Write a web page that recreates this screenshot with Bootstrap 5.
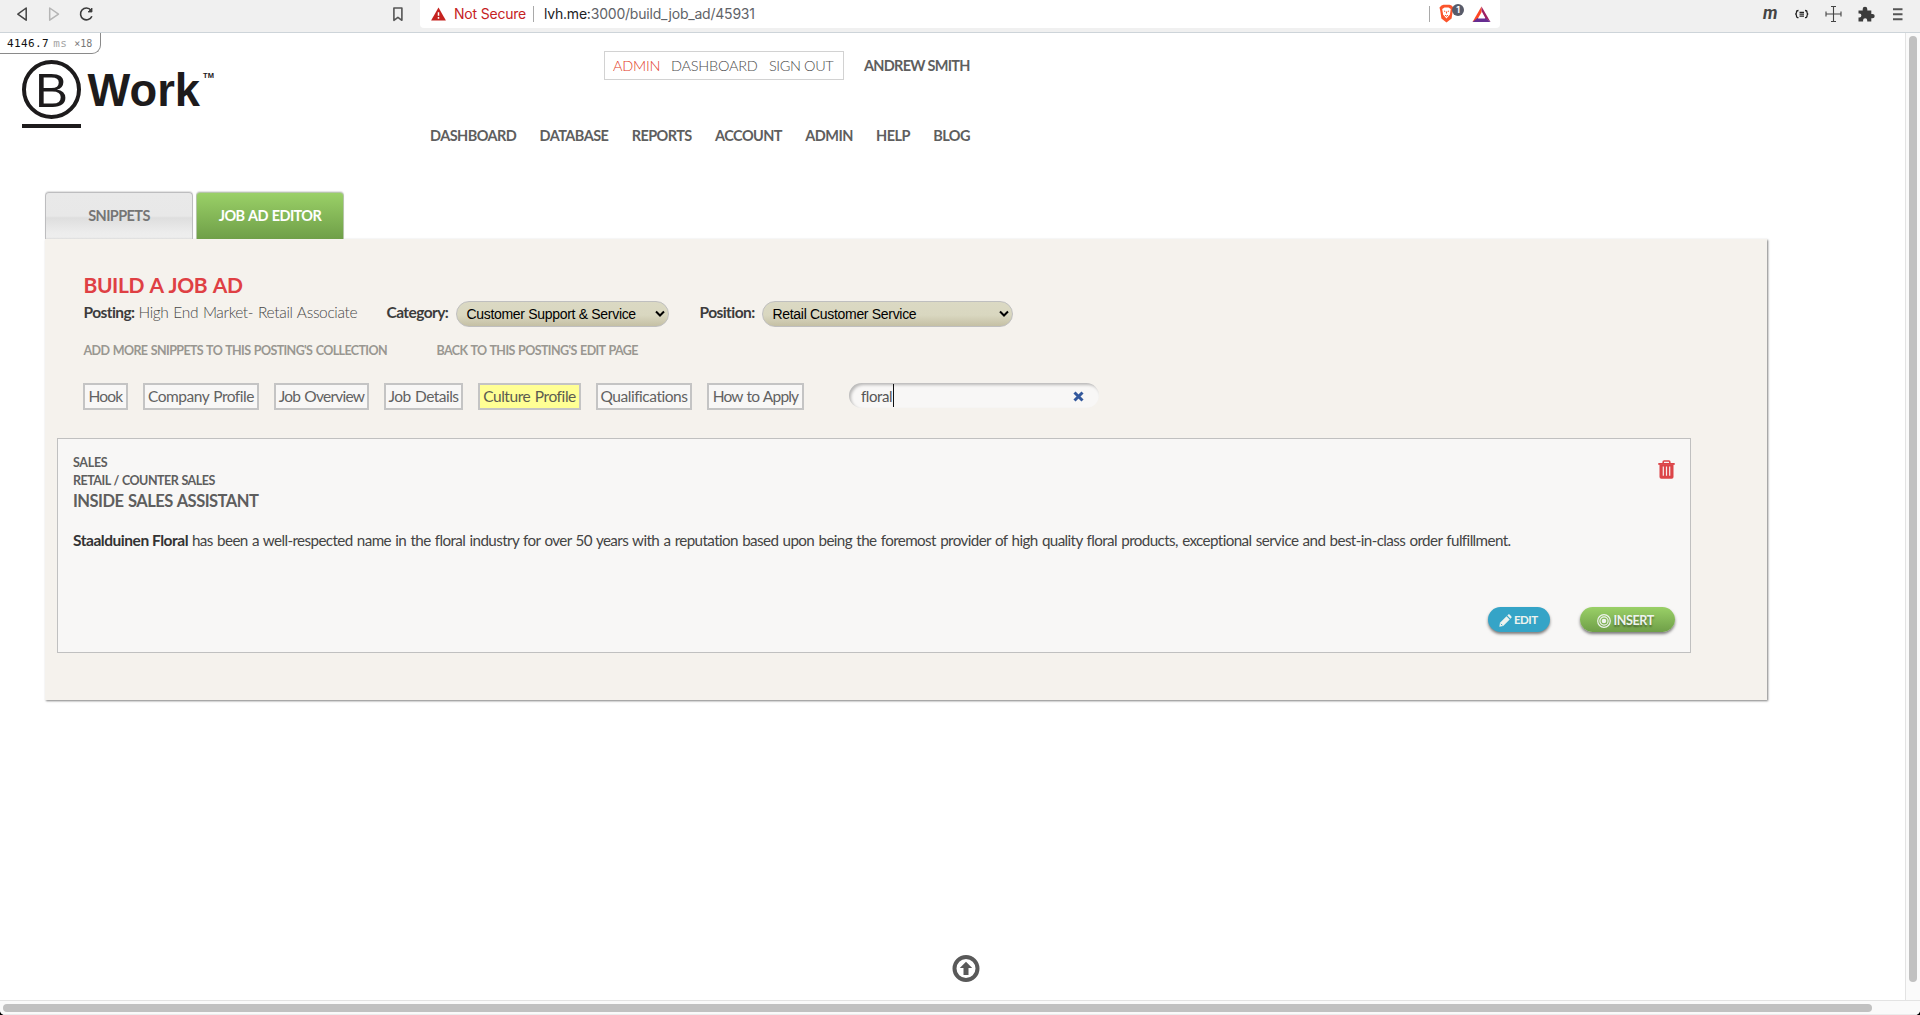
<!DOCTYPE html>
<html lang="en">
<head>
<meta charset="utf-8">
<title>Build a Job Ad</title>
<link href="https://cdn.jsdelivr.net/npm/bootstrap@5.3.0/dist/css/bootstrap.min.css" rel="stylesheet">
<style>
html{background:#000}
body{width:1920px;height:1015px;overflow:hidden;background:#000;font-family:Lato,sans-serif;font-size:15.5px;color:#5e5e5e}
svg{display:block;flex:none}
span,a,strong{white-space:nowrap}
a{color:inherit;text-decoration:none}
.app{width:1920px;height:1015px;background:#fff;border-radius:0 0 5px 5px;overflow:hidden}
/* browser toolbar */
.chrome-bar{height:33px;background:#f0f0f0;border-bottom:1px solid #cdd4d9;padding-left:16px}
.nav-icons{width:404px;height:28px}
.url-box{width:1080px;height:28px;background:#fff;border-radius:0 0 4px 4px;font:14px/28px Inter,sans-serif;padding-left:11px}
.insecure{color:#c5221f;letter-spacing:-.2px;width:79px;margin-left:8px}
.url-path{color:#5f6368;letter-spacing:-.21px;margin-left:10px}
.url-path b{font-weight:400;color:#202124}
.vline{width:1px;height:16px;background:#a9a9a9}
.ext-icons{width:145px;height:28px;margin-left:262px}
/* viewport */
.view{width:1905px;height:967px;background:#fff}
.profiler{left:0;top:33px;width:101px;height:21px;border:1px solid #8a8a8a;border-width:0 1px 1px 0;border-radius:0 0 9px 0;background:#fff;font:11px/21px "DejaVu Sans Mono",monospace;color:#111;padding-left:7px;letter-spacing:.4px}
.profiler i{font-style:normal;color:#a5a5a5;margin-left:4px}
.profiler em{font-style:normal;color:#777;font-size:10px;margin-left:7px;letter-spacing:0}
.page-head{width:970px;height:159px;padding-left:20px}
.head-nav{padding-top:18px}
.user-box{height:29px;border:1px solid #d2d2d2;width:240px;padding-left:8px}
.user-box,.user-row,.main-nav{font-size:14.5px;line-height:20px}
.user-box a{font-weight:300;letter-spacing:-.25px;color:#4c4c4c}
.user-box .u-admin{color:#e23c2a;width:58px}
.user-box .u-dash{width:98px}
.user-box .u-out{letter-spacing:-.4px}
.user-name{font-weight:700;letter-spacing:-.72px;width:106px;margin-left:20px}
.main-nav{font-weight:700;letter-spacing:-.56px;margin-top:46px;width:540px}
.main-nav a{margin-right:0}
.tab-row{padding-left:45px;height:47px}
.tab-btn{width:148px;height:47px;border:1px solid #bdbdbf;border-bottom:0;border-radius:4px 4px 0 0;font-weight:700;font-size:14.5px;line-height:46px;text-align:center;letter-spacing:-.6px;word-spacing:1px;margin-right:3px;box-shadow:0 -1px 1px rgba(0,0,0,.12)}
.tab-off{color:#757575;background:linear-gradient(#e9e9e9 0,#e8e8e8 50%,#dedede 54%,#ececec 85%,#eee 96%,#dcdcdc)}
.tab-on{color:#fff;background:linear-gradient(#9ad067,#6f9f48);border-color:#b5c5a8}
.panel{margin-left:45px;width:1722px;height:461px;background:#f5f2ed;box-shadow:1px 1px 2px rgba(0,0,0,.5);padding:33px 0 0 12px}
.pad{padding-left:26.5px}
.title{font-size:21px;line-height:26px;font-weight:700;color:#df4044;letter-spacing:-.4px;word-spacing:1.5px;margin:0}
.filter-row{padding-top:3px}
.lbl{font-weight:700;color:#3c3c3c;line-height:22px;letter-spacing:-.57px}
.val{font-weight:300;color:#484848;line-height:22px;letter-spacing:-.36px;word-spacing:1px;width:217px;margin-left:4px}
.lbl-post{width:51px}
.lbl-cat{margin-left:31px;width:69px}
.lbl-pos{margin-left:31px;width:62px}
.pick{height:26px;border:1px solid #bfbfbf;border-radius:13px;background:linear-gradient(#dbd9c3 0,#d9d7c0 55%,#c5c0a5);font:14px/24px "Liberation Sans",sans-serif;color:#000;padding:0 3px 0 10px;letter-spacing:-.31px}
.pick-cat{width:213px}
.pick-pos{width:251px}
.sub-links{margin-top:14px;font-size:12.5px;line-height:20px;font-weight:700;color:#999791;letter-spacing:-.62px;word-spacing:1px}
.link-add{width:353px}
.snip-row{margin-top:22px;height:27px}
.snip{height:27px;border:2px solid #c4c4c4;background:#f8f7f6;line-height:23px;text-align:center;margin-right:15px;color:#626262}
.snip-on{background:#ffff94;color:#5c5c50}
.s-hook{width:45px;letter-spacing:-.78px;margin-left:-.5px}
.s-comp{width:116px;letter-spacing:-.5px;word-spacing:1px}
.s-over{width:95px;letter-spacing:-.76px;word-spacing:1px}
.s-det{width:79px;letter-spacing:-.53px;word-spacing:1px}
.s-cult{width:103px;letter-spacing:-.44px;word-spacing:1px}
.s-qual{width:96px;letter-spacing:-.47px}
.s-how{width:97px;letter-spacing:-.81px;word-spacing:1px}
.find{width:250px;height:25px;margin-left:30px;border-radius:13px;background:#f8f7f6;box-shadow:inset 2px 2px 3px rgba(0,0,0,.25);padding:0 15px 0 12px;color:#555;font-size:15px;line-height:24px;letter-spacing:-.4px}
.find svg{margin-top:2px}
.caret{width:1px;height:23px;background:#111;margin-left:1px}
.entry{width:1634px;height:215px;margin-top:28px;border:1px solid #c0c0c0;background:#f8f7f6;padding:15px 15px 0 15px}
.cat{font-size:12.5px;line-height:18px;font-weight:700;letter-spacing:-.5px;word-spacing:.6px}
.cat-top{letter-spacing:-.3px}
.job{font-size:16.5px;line-height:22px;font-weight:700;letter-spacing:-.52px;word-spacing:1px}
.trash{margin-top:6px}
.blurb{margin-top:17px;font-size:15.2px;line-height:22px;color:#444;letter-spacing:-.605px;word-spacing:1px}
.blurb strong{color:#333;font-size:15.5px;letter-spacing:-.46px;word-spacing:0;display:inline-block;width:119px}
.act-row{padding-top:56px}
.pill{height:25px;border-radius:13px;font-weight:700;color:#eef3ee;box-shadow:0 2px 3px rgba(0,0,0,.5)}
.edit{width:62px;background:#35a4c7;font-size:11.5px;letter-spacing:-.5px;padding-left:11px}
.edit svg{margin:2px 2px 0 0}
.insert{width:95px;background:linear-gradient(#9ad067,#6f9f48);font-size:12.5px;letter-spacing:-.4px;padding-left:17px;margin-left:30px;text-shadow:0 2px 2px rgba(0,0,0,.4)}
.insert svg{margin:3px 2.5px 0 0}
.insert span{margin-top:3px}
.to-top{margin:255px 0 0 952px}
/* scrollbars */
.vbar{width:15px;height:967px;background:#fafafa;border-left:1px solid #e3e3e3;padding:3px 0 0 3px}
.vbar div{width:8px;height:946px;border-radius:4px;background:#c1c1c1}
.hbar{height:15px;background:#fafafa;border-top:1px solid #e3e3e3;border-bottom:1px solid #ececec;padding:3px 0 0 3px}
.hbar div{width:1869px;height:8px;border-radius:4px;background:#c1c1c1}
</style>
</head>
<body>
<div class="app">
  <header class="chrome-bar d-flex align-items-start">
    <div class="nav-icons">
      <svg width="404" height="28" fill="none" stroke-width="1.5" stroke-linejoin="round">
        <path d="M10.2 8v12.2L1.8 14.1z" stroke="#444"/>
        <path d="M33.7 8v12.2l8.8-6.1z" stroke="#b5b5b5"/>
        <path d="M75 10.2a5.900 5.900 0 1 0 .9 6" stroke="#3c3c3c" stroke-width="1.600"/><path d="M76 8v4h-4z" fill="#3c3c3c" stroke="#3c3c3c" stroke-width=".8"/>
        <path d="M377.9 8h8v12.3l-4-3-4 3z" stroke="#555" stroke-width="1.6"/>
      </svg>
    </div>
    <div class="url-box d-flex align-items-center">
      <svg width="15" height="14" viewBox="0 0 15 14"><path d="M7.5.6 14.9 13.4H.1z" fill="#c5221f"/><path d="M7.5 5.2v3.6M7.5 10v1.7" stroke="#fff" stroke-width="1.5"/></svg>
      <span class="insecure">Not Secure</span>
      <div class="vline"></div>
      <span class="url-path"><b>lvh.me:</b>3000/build_job_ad/45931</span>
      <svg class="ms-auto" width="71" height="28">
        <path d="M.5 6v16" stroke="#a9a9a9"/>
        <path d="m12.500 5.500 2-.8h6l2 .8 2 2-.7 3-1.200 8-5.100 4-5.100-4-1.200-8-.7-3z" fill="#fb542b"/>
        <path d="m13.200 9 2.300-1.400h4l2.300 1.400-.9 5.600-3.400 4-3.400-4z" fill="#fff"/><path d="m15 11 1.300.6M20 11l-1.300.6M17.500 11.500v2M16 15.200l1.500 1 1.500-1" stroke="#fb542b" fill="none"/>
        <circle cx="29" cy="10" r="6" fill="#585b69"/><text x="29" y="13" font-family="Inter,sans-serif" font-size="8.500" font-weight="700" fill="#fff" text-anchor="middle">1</text>
        <path d="m52.500 6.500-9 15.500 9-4z" fill="#ff4724"/><path d="M52.500 6.500 61.500 22 56.500 18.500 52.500 11z" fill="#9e1f63"/><path d="M43.500 22h18l-5-4h-8z" fill="#662d91"/><path d="m52.500 12.200 3.600 6.300h-7.200z" fill="#fff"/>
      </svg>
    </div>
    <svg class="ext-icons" width="145" height="28" fill="none">
      <text x="1" y="19" font-family="Roboto,sans-serif" font-size="19" font-weight="700" font-style="italic" fill="#444" textLength="14.500" lengthAdjust="spacingAndGlyphs">m</text>
      <path d="M36.500 10.500q-2 0-2 1.700t-1.200 1.800q1.200.1 1.200 1.900t2 1.700M43 10.500q2 0 2 1.700t1.200 1.800q-1.200.1-1.200 1.900t-2 1.700M37.500 12.300h4.500M37.500 14.200h4.500M37.500 16.100h4.500" stroke="#222" stroke-width="1.300"/>
      <path d="M71.500 6.500v15M64 14h15M69 6.500h5M69 21.500h5M64 11.500v5M79 11.500v5" stroke="#444" stroke-width="1.100"/>
      <path d="M97 11h4.200V9.500a2.300 2.300 0 0 1 4.600 0V11h4v3.400h1.200a2.200 2.200 0 0 1 0 4.400h-1.200V22h-4.100v-1.200a2 2 0 0 0-4.100 0V22H97v-4.100h1a1.900 1.900 0 0 0 0-3.800h-1z" fill="#3c3c3c" transform="translate(-.5 -.5)"/>
      <path d="M131 9.200h9.500M131 14.300h9.500M131 19.300h9.500" stroke="#555" stroke-width="1.900"/>
    </svg>
  </header>

  <div class="profiler position-absolute d-flex">4146.7<i>ms</i><em>×18</em></div>

  <div class="d-flex">
    <main class="view">
      <div class="page-head d-flex justify-content-between">
        <svg width="200" height="105">
          <circle cx="31.500" cy="56.500" r="27.500" fill="none" stroke="#1d1b1c" stroke-width="4"/>
          <text x="15" y="73.500" font-family="Liberation Sans,sans-serif" font-size="48" fill="#1d1b1c" textLength="33" lengthAdjust="spacingAndGlyphs">B</text>
          <path d="M2 93h59" stroke="#1d1b1c" stroke-width="4"/>
          <text x="67.500" y="73" font-family="Liberation Sans,sans-serif" font-size="46" font-weight="700" fill="#1d1b1c" textLength="112.500" lengthAdjust="spacingAndGlyphs">Work</text>
          <text x="183" y="44.500" font-family="Liberation Sans,sans-serif" font-size="7.500" font-weight="700" fill="#1d1b1c" textLength="11">TM</text>
        </svg>
        <div class="head-nav d-flex flex-column align-items-end">
          <div class="user-row d-flex align-items-center">
            <div class="user-box d-flex align-items-center">
              <a class="u-admin" href="#">ADMIN</a><a class="u-dash" href="#">DASHBOARD</a><a class="u-out" href="#">SIGN OUT</a>
            </div>
            <span class="user-name">ANDREW SMITH</span>
          </div>
          <nav class="main-nav d-flex justify-content-between">
            <a href="#">DASHBOARD</a><a href="#">DATABASE</a><a href="#">REPORTS</a><a href="#">ACCOUNT</a><a href="#">ADMIN</a><a href="#">HELP</a><a href="#">BLOG</a>
          </nav>
        </div>
      </div>

      <div class="tab-row d-flex">
        <a class="tab-btn tab-off" href="#">SNIPPETS</a>
        <a class="tab-btn tab-on" href="#">JOB AD EDITOR</a>
      </div>

      <section class="panel">
        <h1 class="title pad">BUILD A JOB AD</h1>
        <div class="filter-row pad d-flex align-items-start">
          <span class="lbl lbl-post">Posting:</span><span class="val">High End Market- Retail Associate</span>
          <span class="lbl lbl-cat">Category:</span>
          <div class="pick pick-cat d-flex justify-content-between align-items-center"><span>Customer Support &amp; Service</span><svg width="10" height="8"><path d="m1 1.500 4 4 4-4" fill="none" stroke="#000" stroke-width="2"/></svg></div>
          <span class="lbl lbl-pos">Position:</span>
          <div class="pick pick-pos d-flex justify-content-between align-items-center"><span>Retail Customer Service</span><svg width="10" height="8"><path d="m1 1.500 4 4 4-4" fill="none" stroke="#000" stroke-width="2"/></svg></div>
        </div>
        <div class="sub-links pad d-flex">
          <a class="link-add" href="#">ADD MORE SNIPPETS TO THIS POSTING'S COLLECTION</a><a href="#">BACK TO THIS POSTING'S EDIT PAGE</a>
        </div>
        <div class="snip-row pad d-flex align-items-start">
          <a class="snip s-hook" href="#">Hook</a>
          <a class="snip s-comp" href="#">Company Profile</a>
          <a class="snip s-over" href="#">Job Overview</a>
          <a class="snip s-det" href="#">Job Details</a>
          <a class="snip snip-on s-cult" href="#">Culture Profile</a>
          <a class="snip s-qual" href="#">Qualifications</a>
          <a class="snip s-how" href="#">How to Apply</a>
          <div class="find d-flex align-items-center"><span>floral</span><div class="caret"></div>
            <svg class="ms-auto" width="11" height="11"><path d="m1.500 1.500 8 8m0-8-8 8" stroke="#33589c" stroke-width="3"/></svg>
          </div>
        </div>

        <article class="entry">
          <div class="d-flex justify-content-between">
            <div>
              <div class="cat cat-top">SALES</div>
              <div class="cat">RETAIL / COUNTER SALES</div>
              <div class="job">INSIDE SALES ASSISTANT</div>
            </div>
            <svg class="trash" width="17" height="19" viewBox="0 0 17 19"><path d="M5.200 3.500V2q0-1 1-1h4.600q1 0 1 1v1.500" fill="none" stroke="#dc4548" stroke-width="1.600"/><path d="M.3 3h16.400v1.900H.3z" fill="#dc4548"/><path d="M1.500 4.500h14V17q0 1.800-1.800 1.800H3.300Q1.500 18.800 1.500 17z" fill="#dc4548"/><path d="M5.300 6.500v9.300M8.500 6.500v9.300M11.700 6.500v9.300" stroke="#f8eeee" stroke-width="1.200"/></svg>
          </div>
          <div class="blurb"><strong>Staalduinen Floral</strong><span>has been a well-respected name in the floral industry for over 50 years with a reputation based upon being the foremost provider of high quality floral products, exceptional service and best-in-class order fulfillment.</span></div>
          <div class="act-row d-flex justify-content-end">
            <a class="pill edit d-flex align-items-center" href="#"><svg width="13" height="13" viewBox="0 0 13 13"><path d="M.3 12.700 1 8.800 7.500 2.300l3.200 3.200L4.200 12z" fill="#eef3ee"/><path d="m8.300 1.500.9-.9q.7-.6 1.400 0l1.800 1.800q.6.700 0 1.400l-.9.900z" fill="#eef3ee"/><path d="m1.900 9.800 1.500 1.500" stroke="#35a4c7"/></svg><span>EDIT</span></a>
            <a class="pill insert d-flex align-items-center" href="#"><svg width="14" height="14" viewBox="0 0 14 14" fill="none" stroke="#eef3ee" stroke-width="1.200"><circle cx="7" cy="7" r="6.300"/><circle cx="7" cy="7" r="4.100"/><circle cx="7" cy="7" r="2.300" fill="#eef3ee" stroke="none"/></svg><span>INSERT</span></a>
          </div>
        </article>
      </section>

      <svg class="to-top" width="28" height="28"><circle cx="14" cy="13.500" r="11.500" fill="none" stroke="#595959" stroke-width="4"/><path d="m14 6.800 6.200 6.200h-3.700v7h-5v-7H7.800z" fill="#595959"/></svg>
    </main>
    <div class="vbar"><div></div></div>
  </div>
  <div class="hbar"><div></div></div>
</div>
<script src="https://cdn.jsdelivr.net/npm/bootstrap@5.3.0/dist/js/bootstrap.bundle.min.js"></script>
</body>
</html>
